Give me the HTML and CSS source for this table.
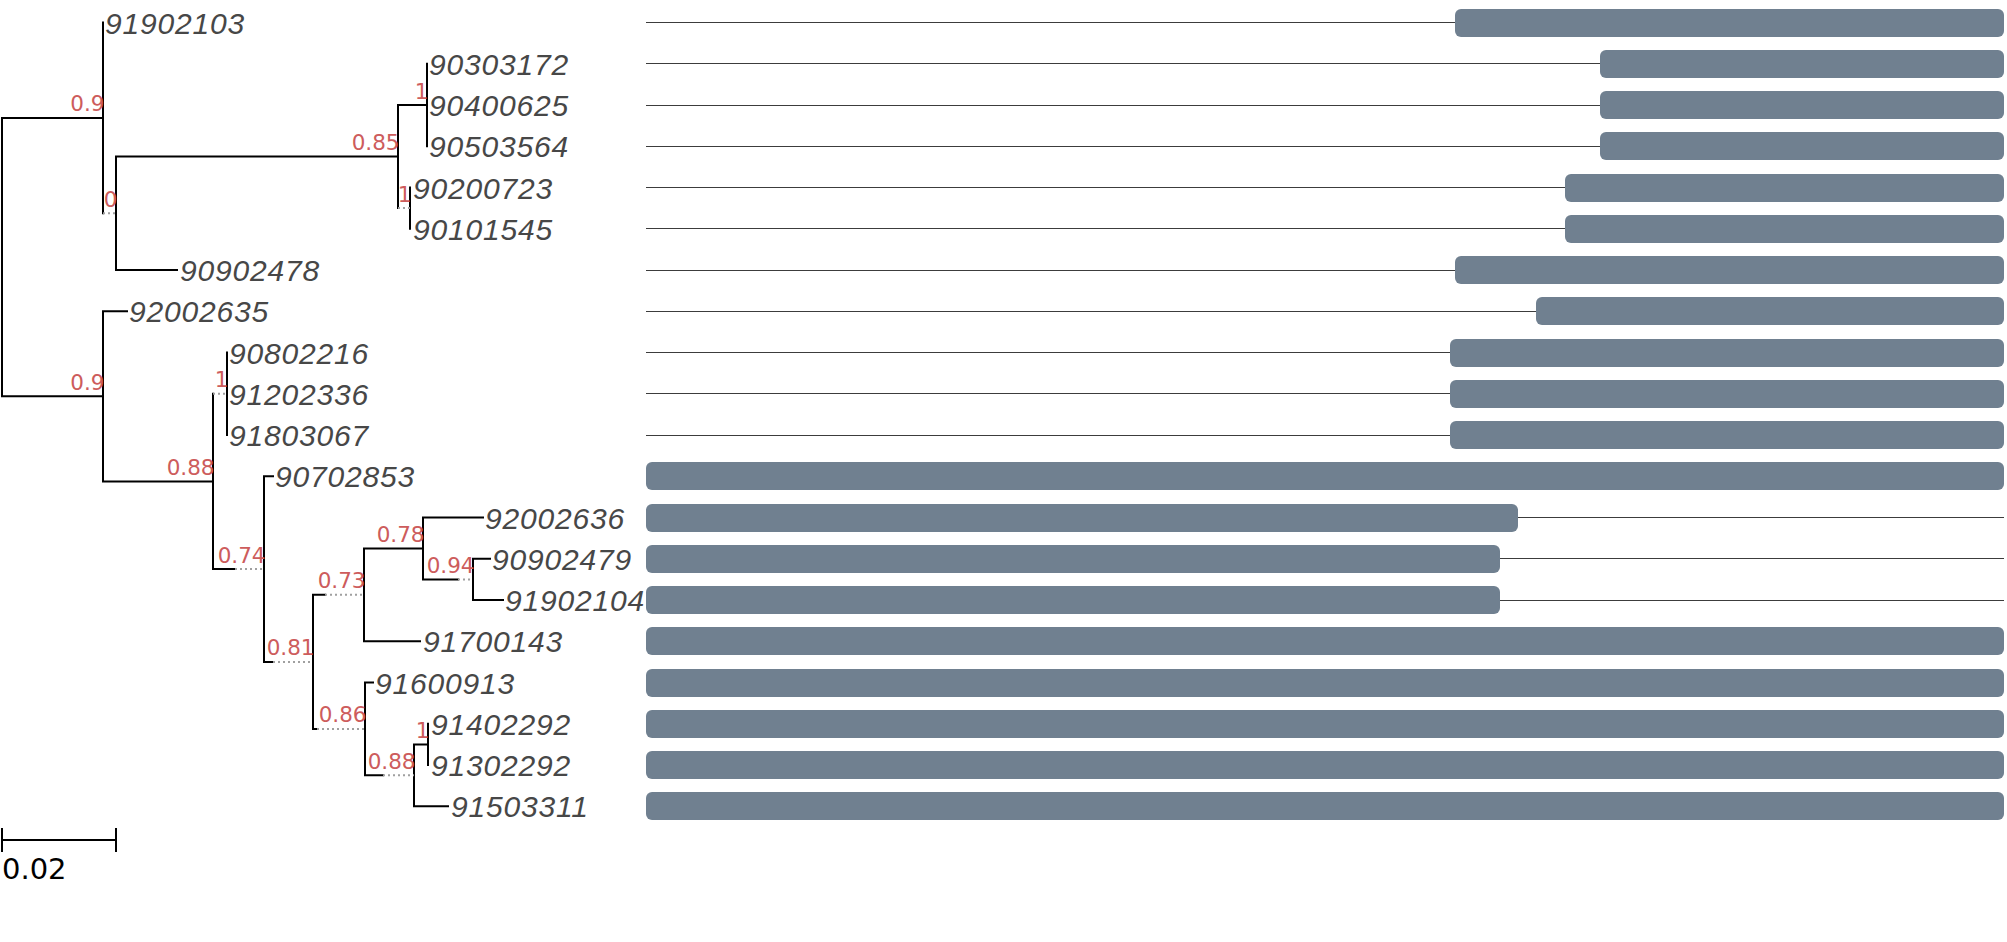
FILE: index.html
```html
<!DOCTYPE html>
<html lang="en">
<head>
<meta charset="utf-8">
<title>Tree</title>
<link rel="stylesheet" href="styles.css">
</head>
<body>
<div class="figure">
  <svg class="tree" width="646" height="900" viewBox="0 0 646 900">
    <path class="branch" d="M2 117.9 V396.3 M2 117.9 H103 M2 396.3 H103
      M103 22.5 V213.3
      M116 156.6 V270 M116 156.6 H398 M116 270 H177
      M398 105 V208.1 M398 105 H427
      M427 63.75 V146.25
      M410 187.5 V228.75
      M103 311.25 V481.4 M103 311.25 H127 M103 481.4 H213
      M213 393.75 V569.1 M213 569.1 H235
      M227 352.5 V435
      M264 476.25 V661.9 M264 476.25 H273 M264 661.9 H273
      M313 594.8 V728.9 M313 594.8 H325 M313 728.9 H317
      M364 548.4 V641.25 M364 548.4 H423 M364 641.25 H420
      M423 517.5 V579.4 M423 517.5 H483 M423 579.4 H458
      M473 558.75 V600 M473 558.75 H490 M473 600 H503
      M365 682.5 V775.3 M365 682.5 H373 M365 775.3 H383
      M414 744.4 V806.25 M414 744.4 H428 M414 806.25 H448
      M428 723.75 V765"/>
    <path class="extra" d="M103 213.3 H116 M398 208.1 H410 M213 393.75 H227
      M235 569.1 H264 M273 661.9 H313 M325 594.8 H364 M317 728.9 H365
      M383 775.3 H414 M458 579.4 H473"/>

    <text class="sup" x="104.5" y="111.4">0.9</text>
    <text class="sup" x="117.5" y="206.8">0</text>
    <text class="sup" x="399.5" y="150.1">0.85</text>
    <text class="sup" x="428.5" y="98.5">1</text>
    <text class="sup" x="411.5" y="201.6">1</text>
    <text class="sup" x="104.5" y="389.8">0.9</text>
    <text class="sup" x="228.5" y="387.3">1</text>
    <text class="sup" x="214.5" y="474.9">0.88</text>
    <text class="sup" x="265.5" y="562.6">0.74</text>
    <text class="sup" x="314.5" y="655.4">0.81</text>
    <text class="sup" x="365.5" y="588.3">0.73</text>
    <text class="sup" x="424.5" y="541.9">0.78</text>
    <text class="sup" x="474.5" y="572.9">0.94</text>
    <text class="sup" x="366.5" y="722.4">0.86</text>
    <text class="sup" x="415.5" y="768.8">0.88</text>
    <text class="sup" x="429.5" y="737.9">1</text>

    <text class="leaf" x="105" y="33.5">91902103</text>
    <text class="leaf" x="429" y="74.75">90303172</text>
    <text class="leaf" x="429" y="116">90400625</text>
    <text class="leaf" x="429" y="157.25">90503564</text>
    <text class="leaf" x="413" y="198.5">90200723</text>
    <text class="leaf" x="413" y="239.75">90101545</text>
    <text class="leaf" x="180" y="281">90902478</text>
    <text class="leaf" x="129" y="322.25">92002635</text>
    <text class="leaf" x="229" y="363.5">90802216</text>
    <text class="leaf" x="229" y="404.75">91202336</text>
    <text class="leaf" x="229" y="446">91803067</text>
    <text class="leaf" x="275" y="487.25">90702853</text>
    <text class="leaf" x="485" y="528.5">92002636</text>
    <text class="leaf" x="492" y="569.75">90902479</text>
    <text class="leaf" x="505" y="611">91902104</text>
    <text class="leaf" x="423" y="652.25">91700143</text>
    <text class="leaf" x="375" y="693.5">91600913</text>
    <text class="leaf" x="431" y="734.75">91402292</text>
    <text class="leaf" x="431" y="776">91302292</text>
    <text class="leaf" x="451" y="817.25">91503311</text>

    <path class="scalebar" d="M2 840 H116 M2 828 V852 M116 828 V852"/>
    <text class="scale" x="2" y="879">0.02</text>
  </svg>

  <div class="tracks">
    <div class="track"><span class="lead"></span><span class="bar" style="width:549px"></span></div>
    <div class="track"><span class="lead"></span><span class="bar" style="width:404px"></span></div>
    <div class="track"><span class="lead"></span><span class="bar" style="width:404px"></span></div>
    <div class="track"><span class="lead"></span><span class="bar" style="width:404px"></span></div>
    <div class="track"><span class="lead"></span><span class="bar" style="width:439px"></span></div>
    <div class="track"><span class="lead"></span><span class="bar" style="width:439px"></span></div>
    <div class="track"><span class="lead"></span><span class="bar" style="width:549px"></span></div>
    <div class="track"><span class="lead"></span><span class="bar" style="width:468px"></span></div>
    <div class="track"><span class="lead"></span><span class="bar" style="width:554px"></span></div>
    <div class="track"><span class="lead"></span><span class="bar" style="width:554px"></span></div>
    <div class="track"><span class="lead"></span><span class="bar" style="width:554px"></span></div>
    <div class="track"><span class="bar full"></span></div>
    <div class="track"><span class="bar" style="width:872px"></span><span class="lead"></span></div>
    <div class="track"><span class="bar" style="width:854px"></span><span class="lead"></span></div>
    <div class="track"><span class="bar" style="width:854px"></span><span class="lead"></span></div>
    <div class="track"><span class="bar full"></span></div>
    <div class="track"><span class="bar full"></span></div>
    <div class="track"><span class="bar full"></span></div>
    <div class="track"><span class="bar full"></span></div>
    <div class="track"><span class="bar full"></span></div>
  </div>
</div>
</body>
</html>
```

FILE: styles.css
```css
html, body {
  margin: 0;
  padding: 0;
  background: #ffffff;
}

body {
  width: 2007px;
  height: 942px;
  overflow: hidden;
  font-family: "DejaVu Sans", sans-serif;
}

.figure {
  display: flex;
  align-items: flex-start;
}

.tree {
  flex: 0 0 646px;
  display: block;
}

.branch {
  fill: none;
  stroke: #000000;
  stroke-width: 2;
  stroke-linecap: square;
}

.extra {
  fill: none;
  stroke: #a0a0a0;
  stroke-width: 2;
  stroke-dasharray: 2 3;
}

.scalebar {
  fill: none;
  stroke: #000000;
  stroke-width: 2;
}

.sup {
  font-family: "DejaVu Sans", sans-serif;
  font-size: 21.5px;
  fill: #cd5c5c;
  text-anchor: end;
}

.leaf {
  font-family: "Liberation Sans", Arial, sans-serif;
  font-style: italic;
  font-size: 30px;
  letter-spacing: 0.8px;
  fill: #474747;
}

.scale {
  font-family: "DejaVu Sans", sans-serif;
  font-size: 29px;
  fill: #000000;
}

.tracks {
  flex: 0 0 1358px;
  display: flex;
  flex-direction: column;
  padding-top: 1.875px;
}

.track {
  height: 41.25px;
  display: flex;
  align-items: center;
}

.lead {
  flex: 1 1 auto;
  height: 1px;
  background: #3c3c3c;
}

.bar {
  flex: 0 0 auto;
  height: 28px;
  border-radius: 6px;
  background: #708090;
}

.bar.full {
  flex: 1 1 auto;
}
```
